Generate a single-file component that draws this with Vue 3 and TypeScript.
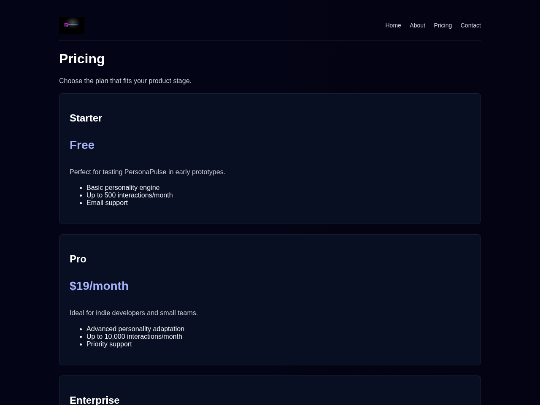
<template>
  <div class="viewport">
    <div class="page">
      <div class="container">
        <header class="navbar">
          <svg class="logo" viewBox="0 0 60 40" aria-hidden="true">
            <defs>
              <radialGradient id="glow">
                <stop offset="0" stop-color="#4a4c50" />
                <stop offset=".5" stop-color="#1b1c1f" />
                <stop offset="1" stop-color="#000" stop-opacity="0" />
              </radialGradient>
              <linearGradient id="word" gradientUnits="userSpaceOnUse" x1="20" y1="0" x2="46" y2="0">
                <stop offset="0" stop-color="#5d4f9a" />
                <stop offset=".35" stop-color="#7d8290" />
                <stop offset=".6" stop-color="#66809c" />
                <stop offset="1" stop-color="#1c3f74" />
              </linearGradient>
            </defs>
            <rect width="60" height="40" fill="#000" />
            <ellipse cx="32" cy="14" rx="22" ry="17" fill="url(#glow)" />
            <path d="M14 23V16h4.500a2.500 2.500 0 0 1 0 5h-2" fill="none" stroke="#a82cae" stroke-width="2.600" />
            <path d="M16 22h5" stroke="#4d44b8" stroke-width="2" />
            <path d="M21 18.500h24" stroke="url(#word)" stroke-width="2.400" />
          </svg>
          <nav class="links">
            <a v-for="link in links" :key="link" href="#">{{ link }}</a>
          </nav>
        </header>

        <h1>Pricing</h1>
        <p>Choose the plan that fits your product stage.</p>

        <section v-for="plan in plans" :key="plan.name" class="card">
          <h2>{{ plan.name }}</h2>
          <p class="price">{{ plan.price }}</p>
          <p>{{ plan.summary }}</p>
          <ul>
            <li v-for="feature in plan.features" :key="feature">{{ feature }}</li>
          </ul>
        </section>
      </div>
    </div>
  </div>
</template>

<script setup lang="ts">
interface Plan {
  name: string
  price: string
  summary: string
  features: string[]
}

const links = ['Home', 'About', 'Pricing', 'Contact']

const plans: Plan[] = [
  {
    name: 'Starter',
    price: 'Free',
    summary: 'Perfect for testing PersonaPulse in early prototypes.',
    features: ['Basic personality engine', 'Up to 500 interactions/month', 'Email support'],
  },
  {
    name: 'Pro',
    price: '$19/month',
    summary: 'Ideal for indie developers and small teams.',
    features: ['Advanced personality adaptation', 'Up to 10,000 interactions/month', 'Priority support'],
  },
  {
    name: 'Enterprise',
    price: 'Custom',
    summary: '',
    features: [],
  },
]
</script>

<style>
body{ background: #030514; }
</style>

<style scoped>
.viewport{ width: 540px; height: 405px; overflow: hidden; }
/* desktop layout at 1280x960, shown at 540x405 */
.page{ box-sizing: border-box; width: 1280px; height: 960px; padding-top: 24px; overflow: hidden; background: linear-gradient(90deg, #030516, #030415 50%, #030313); color: #f3f4f6; font-family: "Liberation Sans", Arial, sans-serif; font-size: 16px; transform: scale(.421875); transform-origin: 0 0; will-change: transform; }
.container{ width: 1000px; margin: 0 auto; }

.navbar{ display: flex; align-items: center; justify-content: space-between; padding: 16px 0; margin-bottom: 24px; border-bottom: 1px solid rgba(255,255,255,.1); }
.logo{ display: block; width: 60px; height: 40px; }
.links{ display: flex; gap: 20.5px; font-size: 14px; }
.links a{ color: #d1d5db; text-decoration: none; }

h1{ margin: 0 0 21.44px; font-size: 32px; color: #fff; }
h2{ margin: 19.92px 0; font-size: 24px; color: #fff; }
p{ margin: 16px 0; line-height: 1.6; color: #c8cad0; }

.card{ margin-bottom: 24px; padding: 24px; background: #090f22; border: 1px solid rgba(255,255,255,.08); border-radius: 8px; }
.price{ margin: 28px 0; font-size: 28px; font-weight: 700; color: #a5b4fc; }
ul{ margin: 16px 0; padding-left: 40px; }
</style>
